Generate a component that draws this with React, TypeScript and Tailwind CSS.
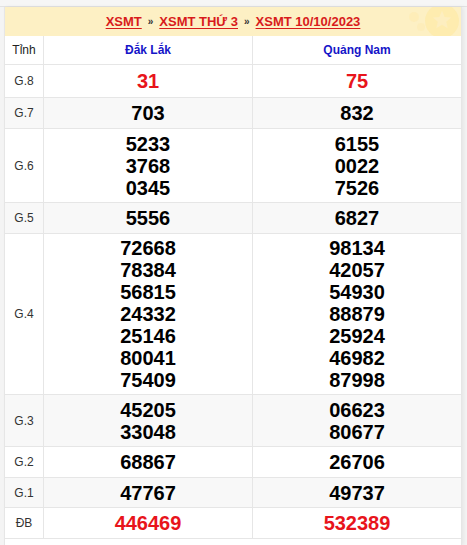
const rows: { label: string; a: string[]; b: string[]; red?: boolean; gray?: boolean; h: string }[] = [
  { label: "G.8", a: ["31"], b: ["75"], red: true, h: "h-[33px]" },
  { label: "G.7", a: ["703"], b: ["832"], gray: true, h: "h-[31px]" },
  { label: "G.6", a: ["5233", "3768", "0345"], b: ["6155", "0022", "7526"], h: "h-[74px]" },
  { label: "G.5", a: ["5556"], b: ["6827"], gray: true, h: "h-[31px]" },
  {
    label: "G.4",
    a: ["72668", "78384", "56815", "24332", "25146", "80041", "75409"],
    b: ["98134", "42057", "54930", "88879", "25924", "46982", "87998"],
    h: "h-[161px]",
  },
  { label: "G.3", a: ["45205", "33048"], b: ["06623", "80677"], gray: true, h: "h-[52px]" },
  { label: "G.2", a: ["68867"], b: ["26706"], h: "h-[31px]" },
  { label: "G.1", a: ["47767"], b: ["49737"], gray: true, h: "h-[30px]" },
  { label: "ĐB", a: ["446469"], b: ["532389"], red: true, h: "h-[31px]" },
];

const Nums = ({ list, red }: { list: string[]; red?: boolean }) => (
  <div
    className={`flex flex-col items-center justify-center border-l border-[#e6e6e6] text-[20px] font-bold leading-[22px] ${
      red ? "text-[#e8141b]" : "text-black"
    }`}
  >
    {list.map((n, i) => (
      <span key={i}>{n}</span>
    ))}
  </div>
);

export default function App() {
  return (
    <div className="h-[545px] w-[467px] overflow-hidden bg-[#f4f4f4] font-['Liberation_Sans',Arial,sans-serif]">
      <div className="h-[7px] border-b border-[#e2e2e2] bg-[#f6f6f6]" />
      <div className="ml-[4px] w-[458px] border-x border-[#e6e6e6] bg-white shadow-[2px_0_4px_rgba(0,0,0,0.06)]">
        {/* breadcrumb header */}
        <div className="relative flex h-[29px] items-center justify-center overflow-hidden bg-[#fdf0c4] text-[13px] font-bold">
          <div className="absolute right-[2px] top-[-3px] h-[34px] w-[34px] rounded-full bg-[#fde9a6] opacity-70" />
          <svg className="absolute right-[8px] top-[2px]" width="22" height="22" viewBox="0 0 24 24">
            <path d="M12 2l2.9 6.6 7.1.6-5.4 4.7 1.6 7-6.2-3.7-6.2 3.7 1.6-7L2 9.2l7.1-.6z" fill="#fdeec0" />
          </svg>
          <div className="absolute right-[42px] top-[5px] h-[10px] w-[10px] rounded-full bg-[#fdebb4] opacity-70" />
          <div className="absolute right-[36px] top-[16px] h-[8px] w-[8px] rounded-full bg-[#fdebb4] opacity-60" />
          <div className="relative flex items-center gap-[6px]">
            <span className="text-[#d81b1b] underline underline-offset-2">XSMT</span>
            <span className="text-[10px] text-[#333]">»</span>
            <span className="text-[#d81b1b] underline underline-offset-2">XSMT THỨ 3</span>
            <span className="text-[10px] text-[#333]">»</span>
            <span className="text-[#d81b1b] underline underline-offset-2">XSMT 10/10/2023</span>
          </div>
        </div>

        {/* table */}
        <div className="grid grid-cols-[38px_209px_1fr]">
          <div className="flex h-[28px] items-center justify-center text-[12px] text-[#222]">Tỉnh</div>
          <div className="flex items-center justify-center border-l border-[#e6e6e6] text-[12px] font-bold text-[#1515c8]">
            Đắk Lắk
          </div>
          <div className="flex items-center justify-center border-l border-[#e6e6e6] text-[12px] font-bold text-[#1515c8]">
            Quảng Nam
          </div>
          {rows.map((r) => (
            <div
              key={r.label}
              className={`col-span-3 grid grid-cols-[38px_209px_1fr] border-t border-[#e6e6e6] ${r.h} ${
                r.gray ? "bg-[#f8f8f8]" : "bg-white"
              }`}
            >
              <div className="flex items-center justify-center text-[12px] text-[#333]">{r.label}</div>
              <Nums list={r.a} red={r.red} />
              <Nums list={r.b} red={r.red} />
            </div>
          ))}
          <div className="col-span-3 h-[8px] border-t border-[#e6e6e6]" />
        </div>
      </div>
    </div>
  );
}
